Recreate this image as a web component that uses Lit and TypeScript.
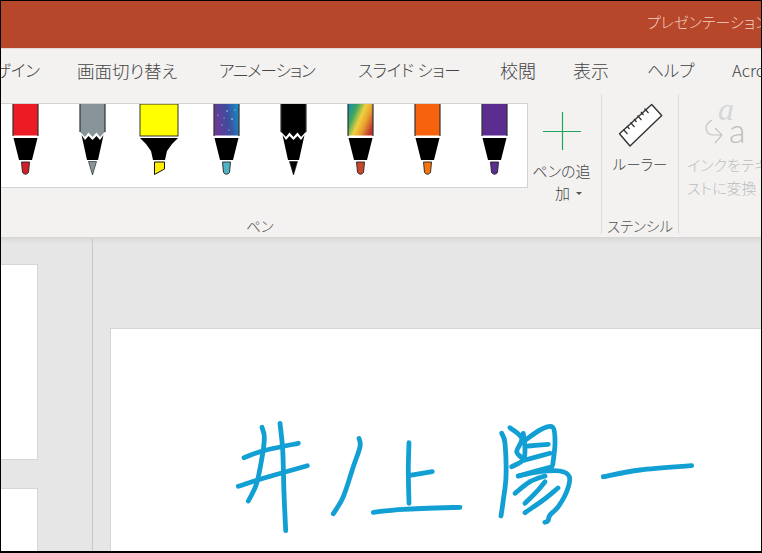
import { LitElement, html, css, svg } from "lit";
import { customElement } from "lit/decorators.js";

type Pt = [number, number];
const smooth = (p: Pt[]) => {
  let d = `M${p[0][0]} ${p[0][1]}`;
  for (let i = 0; i < p.length - 1; i++) {
    const a = p[Math.max(0, i - 1)], b = p[i], c = p[i + 1], e = p[Math.min(p.length - 1, i + 2)];
    const c1 = [b[0] + (c[0] - a[0]) / 6, b[1] + (c[1] - a[1]) / 6];
    const c2 = [c[0] - (e[0] - b[0]) / 6, c[1] - (e[1] - b[1]) / 6];
    d += ` C${c1[0].toFixed(1)} ${c1[1].toFixed(1)} ${c2[0].toFixed(1)} ${c2[1].toFixed(1)} ${c[0]} ${c[1]}`;
  }
  return d;
};

const STROKES: Pt[][] = [
  [[262,427.3],[264.3,436.7],[262.7,453.3],[256.7,483.3],[248.3,501]],
  [[280,423.3],[282.7,450],[284,493.3],[285.7,530.7]],
  [[244,457.7],[263.3,450.7],[298.3,443.3]],
  [[238.3,486.3],[263.3,478.3],[307.3,465.7]],
  [[359,438.3],[360,446.7],[353.3,466.7],[343.3,496.7],[333.3,513.7]],
  [[409,442.7],[408.3,470],[409,503.3]],
  [[408.3,475.7],[432.3,471.7]],
  [[373.3,512.3],[403.3,509.3],[460,507.3]],
  [[501.7,433.3],[505,443.3],[506,476.7],[503.3,500],[501,516]],
  [[510,427.7],[521.7,438.3],[516.7,451.7],[522.7,460],[511.7,466.7]],
  [[523.3,433.3],[525,448.3],[524.3,460]],
  [[523.3,441.7],[540,430],[552.7,427.3],[555,443.3],[552.7,465]],
  [[528.3,446],[548.3,444.3]],
  [[525,460],[550,453.3]],
  [[518.3,476],[551.7,466.7]],
  [[518.3,476],[540,471.7],[560,471],[569.3,476.7],[567.3,490],[558.3,506.7],[550,515],[548,520.7],[545,522.3]],
  [[515,493.3],[530,481.7],[545,476]],
  [[525,503.3],[536.7,491.7],[545,481.7]],
  [[525,512.7],[543.3,500],[558,488]],
  [[603.3,476.7],[640,470],[691.7,465.7]],
];

type Pen = { kind: "marker" | "pencil" | "high"; fill: string; tip: string };
const PENS: Pen[] = [
  { kind: "marker", fill: "#ED1C24", tip: "#D2202A" },
  { kind: "pencil", fill: "#87959A", tip: "#87959A" },
  { kind: "high", fill: "#FFFF00", tip: "#FFEE00" },
  { kind: "marker", fill: "url(#galaxy)", tip: "#4FB3C4" },
  { kind: "pencil", fill: "#000", tip: "#000" },
  { kind: "marker", fill: "url(#rainbow)", tip: "#C8452E" },
  { kind: "marker", fill: "#F7630C", tip: "#F7730C" },
  { kind: "marker", fill: "#5C2D91", tip: "#5C2D91" },
];

const DEFS = svg`<defs>
  <linearGradient id="galaxy" x1="0" y1=".3" x2="1" y2=".1">
    <stop offset="0" stop-color="#6a3a96"/><stop offset=".5" stop-color="#404c9e"/><stop offset="1" stop-color="#1590c4"/>
  </linearGradient>
  <linearGradient id="rainbow" x1="0" y1=".15" x2="1" y2=".7">
    <stop offset="0" stop-color="#1a8fa8"/><stop offset=".25" stop-color="#3fa85c"/><stop offset=".5" stop-color="#f0d040"/><stop offset=".72" stop-color="#e8a030"/><stop offset="1" stop-color="#c0362c"/>
  </linearGradient>
</defs>`;

function penArt(p: Pen) {
  if (p.kind === "high") {
    return svg`
      <rect x="14" y="0" width="38" height="32" fill="${p.fill}" stroke="#333" stroke-width="1"/>
      <path d="M14 34 H52 Q45 40 41 47 L39 56 H27 L25 47 Q21 40 14 34Z" fill="#000"/>
      <path d="M28.500 58 H38.500 V65 L28.500 70.500Z" fill="${p.tip}" stroke="#111" stroke-width="1"/>`;
  }
  if (p.kind === "pencil") {
    return svg`
      <path d="M21 0 H46 V28 L41 33 L37.500 28.500 L33.500 33 L29.500 28.500 L26 33 L21 28Z" fill="${p.fill}"/>
      <path d="M21 0 V28 M46 0 V28" stroke="#333" stroke-width="1.200" fill="none"/>
      <path d="M21 29 L26 34.500 L29.500 30 L33.500 34.500 L37.500 30 L41 34.500 L46 29" fill="none" stroke="#fff" stroke-width="1.300"/>
      <path d="M22.500 31 L26 36 L29.500 32 L33.500 36 L37.500 32 L41 36 L44.500 31 L39 56 H28Z" fill="#000"/>
      <path d="M29.500 57.500 H37.500 L33.500 71Z" fill="${p.tip}" stroke="#111" stroke-width=".6"/>`;
  }
  return svg`
    <rect x="21" y="0" width="25" height="31.500" fill="${p.fill}"/>
    <path d="M21 0 V32 M46 0 V32" stroke="#333" stroke-width="1.200" fill="none"/>
    ${p.fill === "url(#galaxy)" ? svg`<g fill="#fff" opacity=".85"><circle cx="34" cy="7" r=".7"/><circle cx="39" cy="15" r=".8"/><circle cx="29" cy="21" r=".6"/><circle cx="36" cy="26" r=".6"/><circle cx="25" cy="11" r=".5"/><circle cx="42" cy="6" r=".6"/><circle cx="31" cy="14" r=".5"/></g>` : ""}
    <path d="M21.500 34 H45.500 L40 56 H27Z" fill="#000"/>
    <path d="M29.500 58 H37.500 L36.500 68.500 Q33.500 72 30.500 68.500Z" fill="${p.tip}" stroke="#222" stroke-width=".9"/>`;
}

@customElement("app-root")
export class AppRoot extends LitElement {
  static styles = css`
    :host {
      display: block;
      width: 762px;
      height: 553px;
      overflow: hidden;
      font-family: "Noto Sans CJK JP", "Noto Sans", sans-serif;
      font-feature-settings: "palt";
      font-weight: 300;
    }
    .frame {
      box-sizing: border-box;
      width: 762px;
      height: 553px;
      border: solid #000;
      border-width: 1px 1px 2px 1px;
      background: #e6e6e6;
      display: flex;
      flex-direction: column;
      overflow: hidden;
    }
    .title {
      flex: 0 0 47px;
      background: #b7472a;
      display: flex;
      justify-content: flex-end;
      align-items: flex-start;
      overflow: hidden;
    }
    .title span {
      color: #f3cdbf;
      font-size: 15px;
      line-height: 20px;
      margin-top: 11px;
      white-space: nowrap;
      width: 114px;
      overflow: hidden;
    }
    .tabs {
      flex: 0 0 46px;
      background: #f3f2f1;
      border-top: 1px solid #e4d9d5;
      box-sizing: border-box;
      display: flex;
      align-items: center;
      color: #444;
      font-size: 16.500px;
      white-space: nowrap;
      overflow: hidden;
      padding-bottom: 3px;
    }
    .tab { flex: 0 0 auto; }
    .t0 {
      width: 76px;
      display: flex;
      justify-content: flex-end;
      padding-right: 37px;
      box-sizing: border-box;
    }
    .t0 span { flex: 0 0 auto; }
    .t1 { width: 142px; font-size: 17.500px; }
    .t2 { width: 139px; letter-spacing: -1px; }
    .t3 { width: 142px; letter-spacing: -0.200px; }
    .t4 { width: 73px; font-size: 18px; }
    .t5 { width: 74px; font-size: 18px; }
    .t6 { width: 85px; }
    .ribbon {
      flex: 0 0 143px;
      background: #f3f2f1;
      display: flex;
      box-shadow: 0 1px 1px #d6d6d6;
      position: relative;
      z-index: 1;
    }
    .group {
      box-sizing: border-box;
      display: flex;
      flex-direction: column;
      align-items: center;
      color: #444;
    }
    .sep { flex: 0 0 1px; background: #dcdcdc; margin-bottom: 3px; }
    .g-pens { flex: 0 0 600px; }
    .g-pens-top { display: flex; align-self: stretch; flex: 1; }
    .gallery {
      flex: 0 0 527px;
      box-sizing: border-box;
      height: 85px;
      margin-top: 9px;
      background: #fff;
      border: 1px solid #d2d2d2;
      border-left: 0;
      display: flex;
      overflow: hidden;
    }
    .pen-track { display: flex; margin-left: -9px; }
    .pen-track svg { flex: 0 0 67px; width: 67px; height: 83px; display: block; }
    .add {
      flex: 1;
      box-sizing: border-box;
      padding-right: 6px;
      display: flex;
      flex-direction: column;
      align-items: center;
      font-size: 15px;
      line-height: 22px;
      white-space: nowrap;
    }
    .add svg { margin-top: 17px; margin-bottom: 9px; display: block; }
    .add-line { display: flex; align-items: center; padding-left: 14px; }
    .caret {
      width: 0;
      height: 0;
      margin-left: 6px;
      border: 3px solid transparent;
      border-top: 3px solid #555;
      border-bottom: 0;
    }
    .label {
      font-size: 14.500px;
      line-height: 20px;
      margin-bottom: 1px;
      color: #555;
    }
    .g-pens .label { align-self: flex-start; margin-left: 245px; }
    .g-sten { flex: 0 0 76px; }
    .g-sten .body {
      flex: 1;
      display: flex;
      flex-direction: column;
      align-items: center;
      font-size: 14.500px;
    }
    .g-sten svg { display: block; margin-top: 8px; margin-bottom: 5px; }
    .g-ink {
      flex: 1;
      align-items: flex-start;
      padding-left: 8px;
      color: #bdbdbd;
      font-size: 15px;
      line-height: 23px;
      overflow: hidden;
      white-space: nowrap;
    }
    .g-ink svg { display: block; margin: 8px 0 3px 17px; }
    .work { flex: 1; display: flex; min-height: 0; background: linear-gradient(#d8d8d8, #e6e6e6 7px); }
    .thumbs {
      flex: 0 0 91px;
      border-right: 1px solid #c8c8c8;
      display: flex;
      flex-direction: column;
      gap: 28px;
      padding-top: 27px;
      box-sizing: content-box;
      overflow: hidden;
    }
    .thumb {
      flex: 0 0 auto;
      width: 36px;
      background: #fff;
      border: 1px solid #d6d6d6;
      border-left: 0;
    }
    .thumb.a { height: 194px; }
    .thumb.b { height: 100px; }
    .stage { flex: 1; padding: 91px 0 0 17px; overflow: hidden; }
    .slide { background: #fff; border: 1px solid #d6d6d6; border-right: 0; height: 240px; }
    .slide svg { display: block; }
    .ink { fill: none; stroke: #12a0d4; stroke-width: 4.800; stroke-linecap: round; stroke-linejoin: round; }
  `;

  render() {
    const pens = PENS.map(
      (p) => html`<svg viewBox="0 0 67 83" width="67" height="83">${DEFS}${penArt(p)}</svg>`
    );
    return html`
      <div class="frame">
        <div class="title"><span>プレゼンテーション</span></div>
        <div class="tabs">
          <div class="tab t0"><span>デザイン</span></div>
          <div class="tab t1">画面切り替え</div>
          <div class="tab t2">アニメーション</div>
          <div class="tab t3">スライド ショー</div>
          <div class="tab t4">校閲</div>
          <div class="tab t5">表示</div>
          <div class="tab t6">ヘルプ</div>
          <div class="tab">Acrobat</div>
        </div>
        <div class="ribbon">
          <div class="group g-pens">
            <div class="g-pens-top">
              <div class="gallery"><div class="pen-track">${pens}</div></div>
              <div class="add">
                <svg width="40" height="40" viewBox="0 0 40 40">
                  <path d="M20.500 1 V39 M1 20.500 H39" stroke="#1ea75a" stroke-width="1.200" fill="none"/>
                </svg>
                <div>ペンの追</div>
                <div class="add-line">加<span class="caret"></span></div>
              </div>
            </div>
            <div class="label">ペン</div>
          </div>
          <div class="sep"></div>
          <div class="group g-sten">
            <div class="body">
              <svg width="46" height="46" viewBox="617 101 46 46">
                <path d="M651.700 103.500 L661.700 114.500 L630 145 L619.500 132.700Z" fill="#fff" stroke="#333" stroke-width="1.400" stroke-linejoin="round"/>
                <path d="M623.500 128.500 l4 4.500 M627 125 l2.500 3 M630.500 121.500 l4 4.500 M634 118 l2.500 3 M637.500 114.500 l4 4.500 M641 111 l2.500 3 M644.500 107.500 l4 4.500" stroke="#333" stroke-width="1.200" fill="none"/>
              </svg>
              <div>ルーラー</div>
            </div>
            <div class="label">ステンシル</div>
          </div>
          <div class="sep"></div>
          <div class="group g-ink">
            <svg width="52" height="48" viewBox="0 0 52 48">
              <text x="14" y="18" font-family="Liberation Serif, serif" font-style="italic" font-size="32" fill="#d6d6d6">a</text>
              <text x="25" y="41" font-family="Lato, sans-serif" font-weight="300" font-size="34" fill="#bdbdbd">a</text>
              <path d="M8 18 Q2 22 2 26 Q3 33 9 33 H18 M11 26 L18 33 L11 41" fill="none" stroke="#c4c4c4" stroke-width="1.200"/>
            </svg>
            <div>インクをテキ</div>
            <div>ストに変換</div>
          </div>
        </div>
        <div class="work">
          <div class="thumbs">
            <div class="thumb a"></div>
            <div class="thumb b"></div>
          </div>
          <div class="stage">
            <div class="slide">
              <svg width="651" height="224" viewBox="111 329 651 224">
                ${STROKES.map((s) => svg`<path class="ink" d="${smooth(s)}"/>`)}
              </svg>
            </div>
          </div>
        </div>
      </div>
    `;
  }
}
